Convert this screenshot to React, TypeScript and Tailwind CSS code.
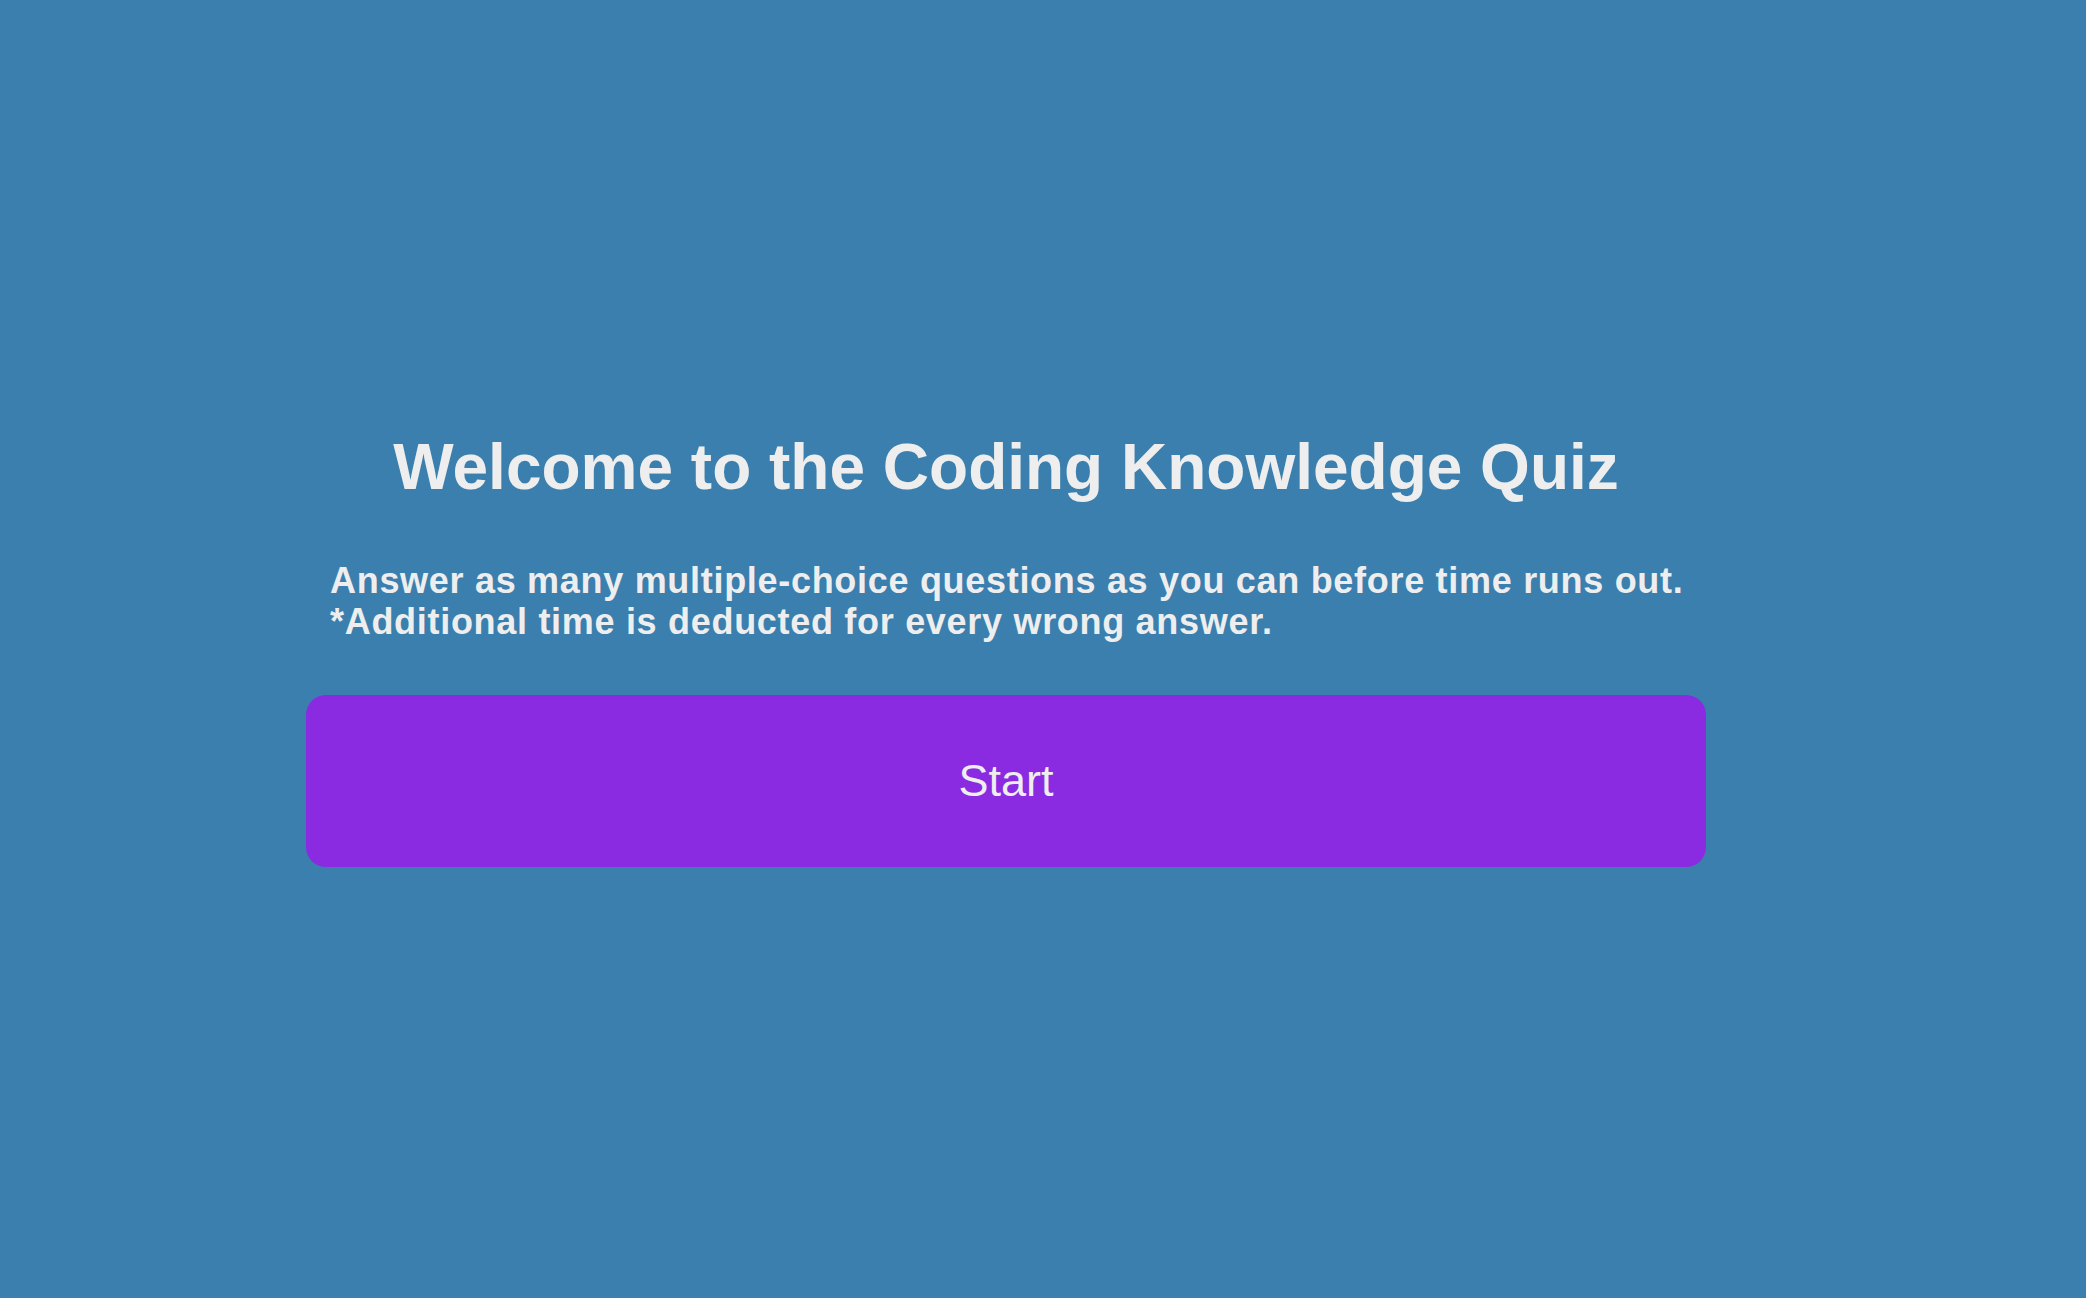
import React from "react";

export default function App() {
  return (
    <div
      className="min-h-screen w-full bg-[#3b7fae] flex items-center justify-center pr-[74px]"
      style={{ fontFamily: '"Liberation Sans", Arial, Helvetica, sans-serif' }}
    >
      <div className="w-[1400px] flex flex-col">
        <h1 className="text-[64px] leading-[72px] font-bold text-[#eeeeee] text-center">
          Welcome to the Coding Knowledge Quiz
        </h1>
        <p className="mt-[57px] pl-[24px] whitespace-nowrap text-[36px] leading-[41px] tracking-[0.7px] font-bold text-[#eeeeee]">
          Answer as many multiple-choice questions as you can before time runs out.
          <br />
          *Additional time is deducted for every wrong answer.
        </p>
        <button className="mt-[53px] h-[172px] w-full rounded-[20px] bg-[#8a2be2] text-[45px] text-[#eeeeee] flex items-center justify-center">
          Start
        </button>
      </div>
    </div>
  );
}
